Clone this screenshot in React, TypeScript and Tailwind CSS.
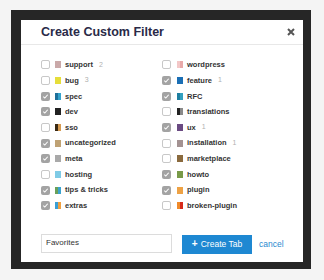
import React from "react";

type Item = { label: string; colors: string[]; checked: boolean; count?: number };

const LEFT: Item[] = [
  { label: "support", colors: ["#caa9a9"], checked: false, count: 2 },
  { label: "bug", colors: ["#e6de3a"], checked: false, count: 3 },
  { label: "spec", colors: ["#1f6f9a", "#35a3cc"], checked: true },
  { label: "dev", colors: ["#222222"], checked: true },
  { label: "sso", colors: ["#3a2a14", "#d69a50"], checked: false },
  { label: "uncategorized", colors: ["#bfa274"], checked: true },
  { label: "meta", colors: ["#a9a9a9"], checked: true },
  { label: "hosting", colors: ["#7fcbe6"], checked: false },
  { label: "tips & tricks", colors: ["#6aa05a", "#3aa3d0"], checked: true },
  { label: "extras", colors: ["#3a9fd6", "#f0a040"], checked: true },
];

const RIGHT: Item[] = [
  { label: "wordpress", colors: ["#f3c7c7", "#e8a9a9"], checked: false },
  { label: "feature", colors: ["#1b6fb5"], checked: true, count: 1 },
  { label: "RFC", colors: ["#1e7fa0", "#33a0c0"], checked: true },
  { label: "translations", colors: ["#222222", "#8a8a8a"], checked: false },
  { label: "ux", colors: ["#6a4a82"], checked: true, count: 1 },
  { label: "installation", colors: ["#a39292"], checked: false, count: 1 },
  { label: "marketplace", colors: ["#8a6a3e"], checked: false },
  { label: "howto", colors: ["#789a48"], checked: true },
  { label: "plugin", colors: ["#eea245"], checked: true },
  { label: "broken-plugin", colors: ["#f08a2a", "#d62a1a"], checked: false },
];

function Checkbox({ checked }: { checked: boolean }) {
  if (checked) {
    return (
      <span className="w-[9px] h-[9px] rounded-[2px] bg-[#a3a3a3] flex items-center justify-center flex-shrink-0">
        <svg width="7" height="7" viewBox="0 0 8 8">
          <path d="M1.5 4.2 L3.2 5.8 L6.5 2" fill="none" stroke="#ffffff" strokeWidth="1.2" />
        </svg>
      </span>
    );
  }
  return <span className="w-[9px] h-[9px] rounded-[2px] bg-white border border-[#c8c8c8] flex-shrink-0" />;
}

function Row({ item, gap }: { item: Item; gap: string }) {
  return (
    <div className="h-[15.67px] flex items-center">
      <Checkbox checked={item.checked} />
      <span className={`${gap} w-[6px] h-[7px] flex flex-shrink-0 overflow-hidden`}>
        {item.colors.map((c, i) => (
          <span key={i} className="flex-1 h-full" style={{ backgroundColor: c }} />
        ))}
      </span>
      <span className="ml-[4px] text-[7.5px] font-bold text-[#333] whitespace-nowrap">{item.label}</span>
      {item.count !== undefined && (
        <span className="ml-[6px] text-[7px] text-[#b0b0b0]">{item.count}</span>
      )}
    </div>
  );
}

export default function App() {
  return (
    <div
      className="w-[324px] h-[280px] bg-[#f4f4f4] pt-[10px] pl-[11px]"
      style={{ fontFamily: '"Liberation Sans", Arial, sans-serif' }}
    >
      <div className="w-[300px] h-[259px] bg-[#262626] pt-[10px] pl-[10px]">
        <div className="w-[282px] h-[242px] bg-white flex flex-col">
          {/* Header */}
          <div className="h-[25px] flex-shrink-0 border-b border-[#e8e8e8] flex items-center justify-between pl-[20px] pr-[8px]">
            <span className="text-[12.5px] font-bold text-[#2a2a48]">Create Custom Filter</span>
            <svg width="8" height="8" viewBox="0 0 8 8">
              <path d="M1 1 L7 7 M7 1 L1 7" stroke="#555" strokeWidth="2" />
            </svg>
          </div>

          {/* Label grid */}
          <div className="pt-[12px] pl-[20px] grid grid-cols-[121px_1fr]">
            <div className="flex flex-col">
              {LEFT.map((it) => (
                <Row key={it.label} item={it} gap="ml-[5px]" />
              ))}
            </div>
            <div className="flex flex-col">
              {RIGHT.map((it) => (
                <Row key={it.label} item={it} gap="ml-[6px]" />
              ))}
            </div>
          </div>

          {/* Footer */}
          <div className="mt-[19px] pl-[20px] flex items-center">
            <div className="w-[131px] h-[19px] border border-[#dcdcdc] flex items-center pl-[4px] text-[8px] text-[#333]">
              Favorites
            </div>
            <div className="ml-[10px] mt-[2px] w-[70px] h-[19px] bg-[#1e88d2] flex items-center justify-center text-white text-[8.5px]">
              <span className="font-bold text-[10px] leading-none mr-[3px]">+</span>
              Create Tab
            </div>
            <span className="ml-[7px] mt-[2px] text-[8.5px] text-[#2a8ad0]">cancel</span>
          </div>
        </div>
      </div>
    </div>
  );
}
